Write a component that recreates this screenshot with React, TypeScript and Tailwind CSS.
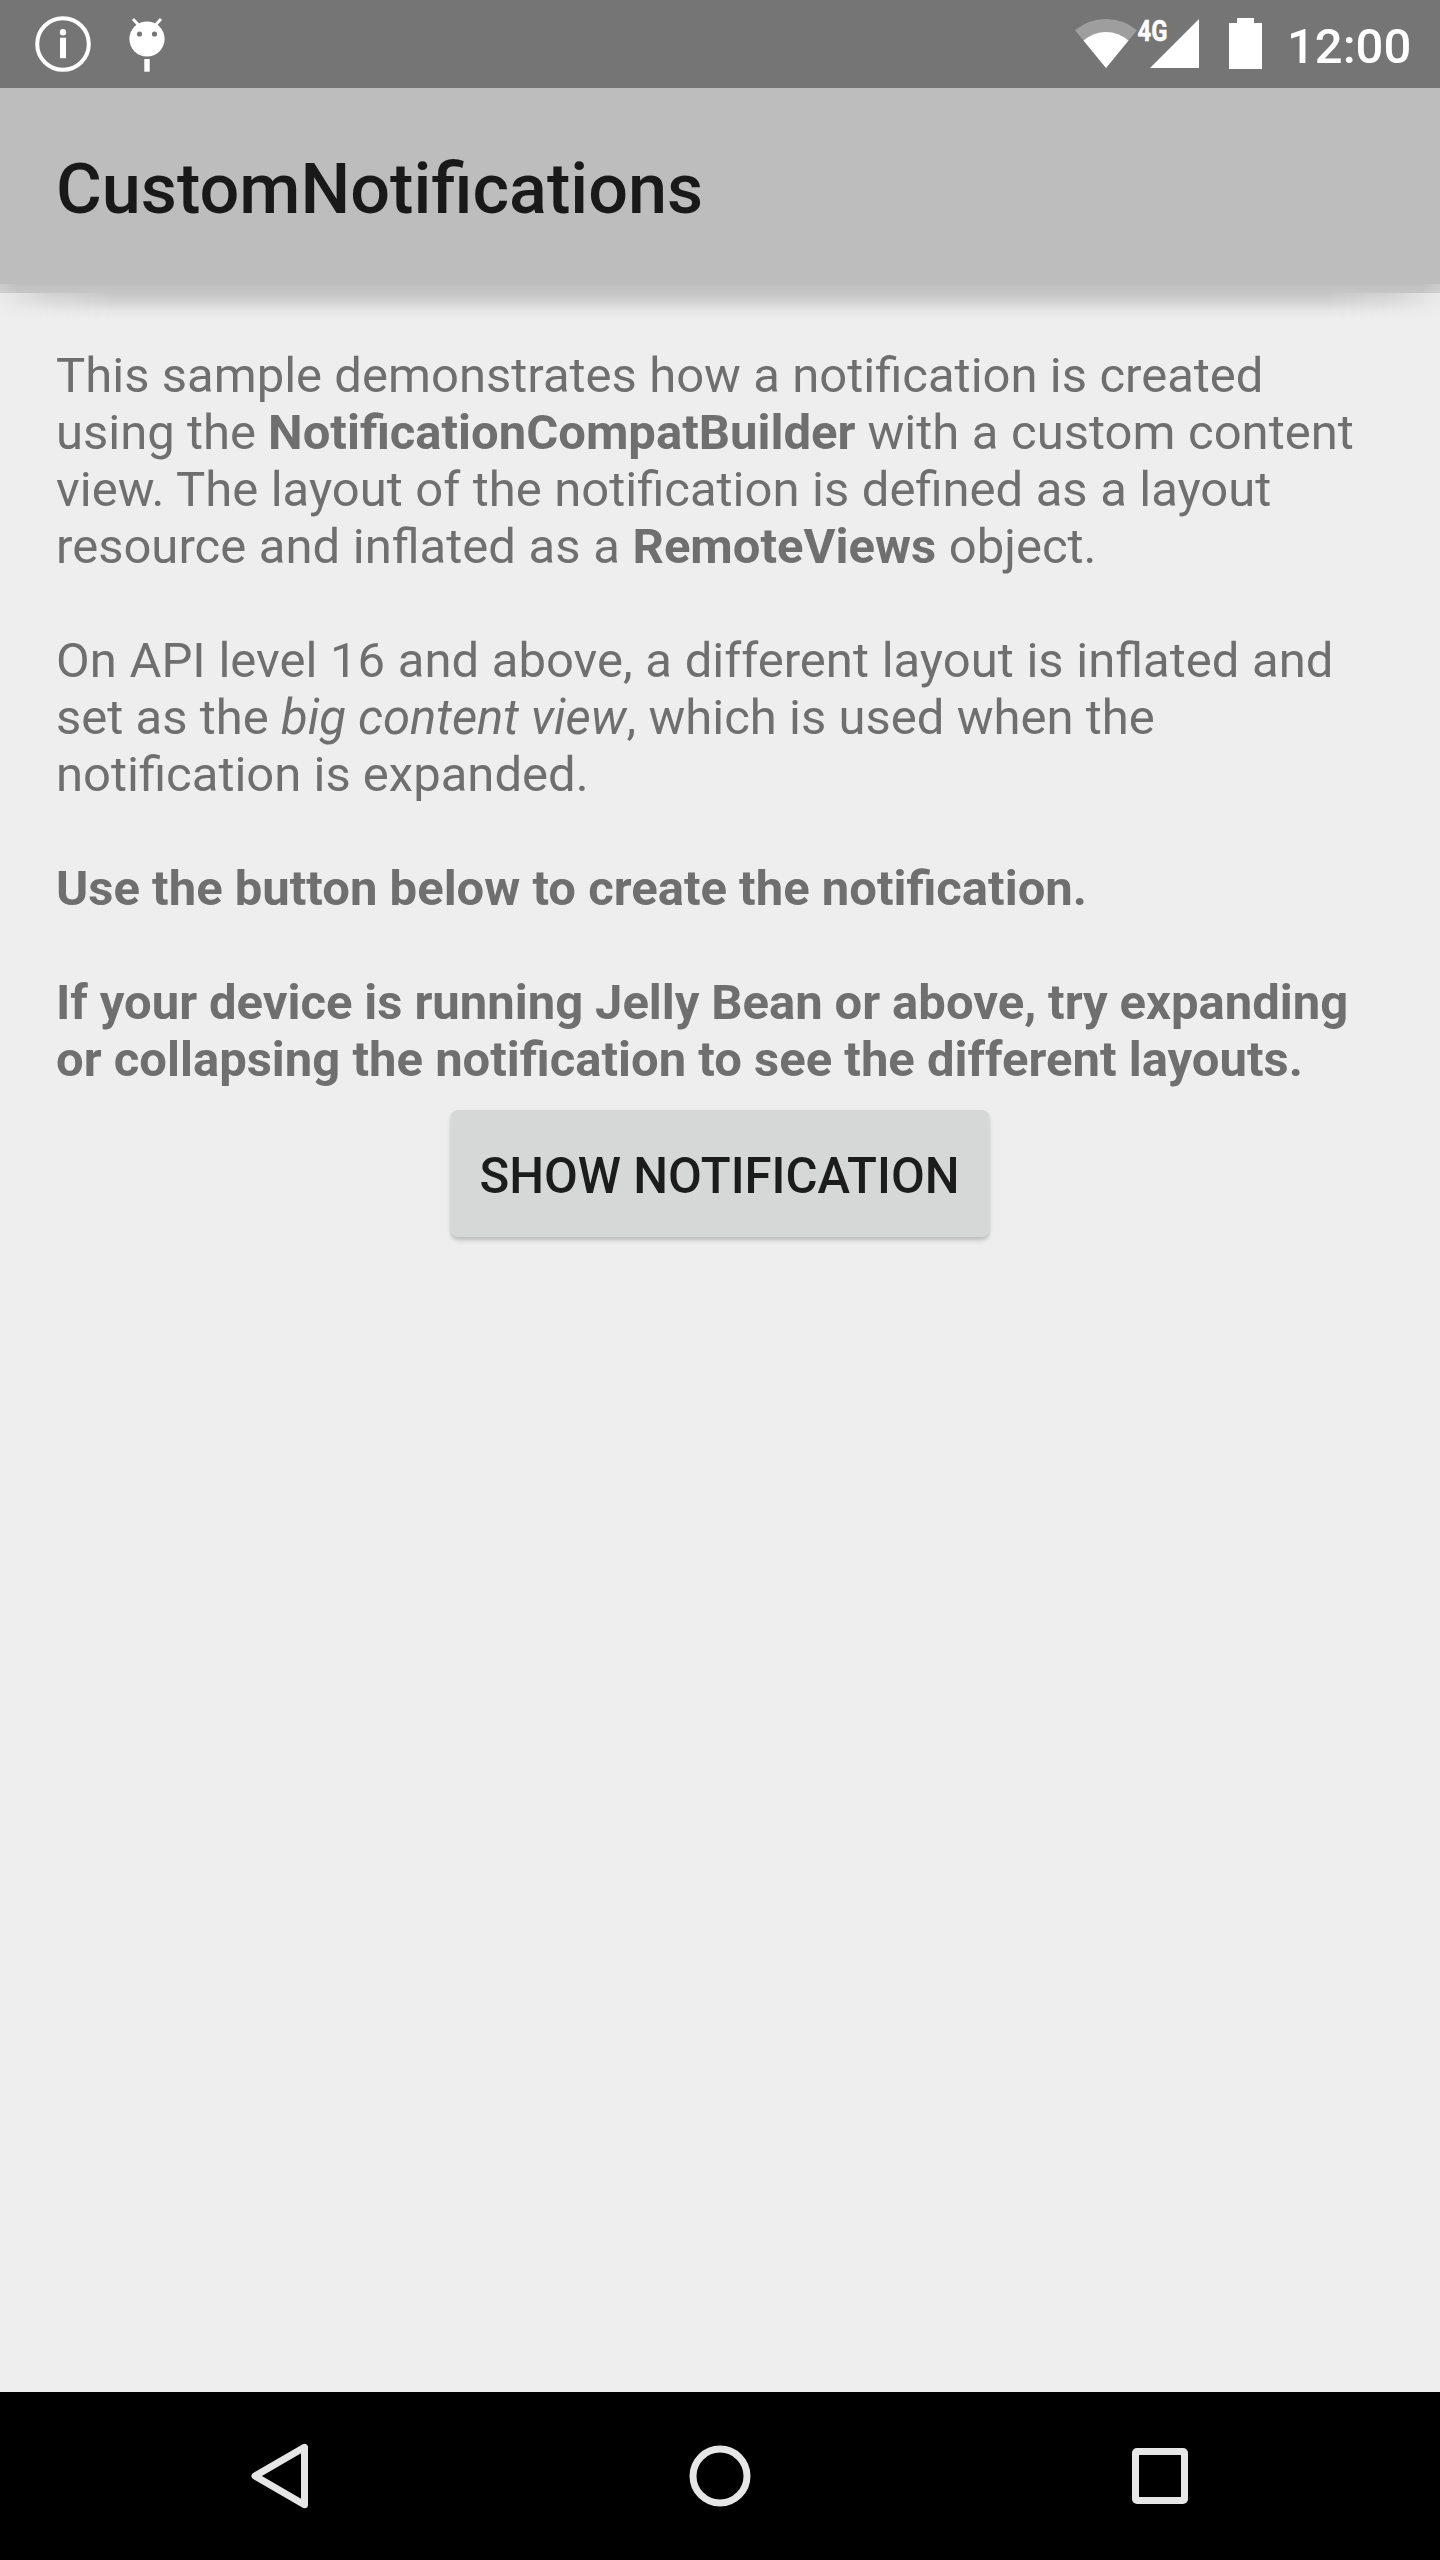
import React from "react";

function StatusBar() {
  return (
    <div className="flex h-[88px] shrink-0 justify-between bg-[#757575] text-white">
      <svg width="200" height="88" viewBox="0 0 200 88" fill="none">
        <circle cx="63" cy="44" r="25.8" stroke="#fff" strokeWidth="4" />
        <circle cx="63" cy="32.2" r="3.2" fill="#fff" />
        <rect x="60" y="37.7" width="6" height="20.5" fill="#fff" />
        <path d="M133 19l6 6.500M161 19l-6 6.500" stroke="#fff" strokeWidth="2.800" />
        <circle cx="147" cy="39" r="17.600" fill="#fff" />
        <circle cx="139.500" cy="34" r="2.600" fill="#757575" />
        <circle cx="154.500" cy="34" r="2.600" fill="#757575" />
        <rect x="144.300" y="59" width="5.400" height="12.700" fill="#fff" />
      </svg>
      <div className="flex">
        <svg width="230" height="88" viewBox="1060 0 230 88">
          <path d="M1106 68L1075 30.300Q1088.500 19 1106 19T1137 30.300Z" fill="#9e9e9e" />
          <path d="M1106 68L1083.500 40.600Q1093.500 32 1106 32T1128.500 40.600Z" fill="#fff" />
          <path d="M1150 68H1199V19Z" fill="#fff" />
          <path d="M1229 69V23H1237V18H1254V23H1262V69Z" fill="#fff" />
          <text x="1137.500" y="41" fontFamily="Roboto" fontWeight="700" fontSize="29.500" textLength="30" lengthAdjust="spacingAndGlyphs" fill="#fff" stroke="#fff" strokeWidth="0.5">4G</text>
        </svg>
        <div className="-ml-[3px] w-[153px] text-[49px] leading-[93px] font-medium">12:00</div>
      </div>
    </div>
  );
}

function HeaderShadow() {
  return (
    <div className="pointer-events-none absolute inset-x-0 top-full">
      <div className="h-[9px] bg-[linear-gradient(to_bottom,#bfbfbf,#c6c6c6)] [mask-image:linear-gradient(to_right,rgba(0,0,0,0.75),#000_18px,#000_1422px,rgba(0,0,0,0.75))]" />
      <div className="h-[27px] bg-[linear-gradient(to_bottom,#c6c6c6,#d5d5d5_10px,#e6e6e6_18px,#eeeeee)] [mask-image:linear-gradient(to_right,rgba(0,0,0,0.1),rgba(0,0,0,0.65)_45px,#000_110px,#000_1330px,rgba(0,0,0,0.65)_1395px,rgba(0,0,0,0.1))]" />
    </div>
  );
}

function NavigationBar() {
  return (
    <div className="flex h-[168px] shrink-0 items-center justify-around bg-black px-[60px]">
      <svg width="120" height="168" viewBox="220 2392 120 168" fill="none">
        <path d="M304.500 2447.300V2504.700L255 2476Z" stroke="#e6e6e6" strokeWidth="7" strokeLinejoin="round" />
      </svg>
      <svg width="120" height="168" viewBox="660 2392 120 168" fill="none">
        <circle cx="720" cy="2476" r="27" stroke="#e6e6e6" strokeWidth="7" />
      </svg>
      <svg width="120" height="168" viewBox="1100 2392 120 168" fill="none">
        <path d="M1137 2448H1183a5 5 0 0 1 5 5V2499a5 5 0 0 1 -5 5H1137a5 5 0 0 1 -5 -5V2453a5 5 0 0 1 5 -5ZM1139 2455V2497H1181V2455Z" fill="#e6e6e6" fillRule="evenodd" />
      </svg>
    </div>
  );
}

export default function App() {
  return (
    <div className="flex h-[2560px] w-[1440px] flex-col overflow-hidden bg-[#eeeeee] font-['Roboto',sans-serif]">
      <StatusBar />
      <header className="relative z-10 flex h-[196px] shrink-0 items-center bg-[#bdbdbd] pt-1.5 pl-14">
        <h1 className="text-[70.2px] leading-[82px] font-medium text-[#191919]">CustomNotifications</h1>
        <HeaderShadow />
      </header>
      <main className="flex grow flex-col items-center">
        <div className="flex w-full flex-col gap-[57px] pt-[63px] pl-14 text-[49px] leading-[57px] whitespace-nowrap text-[#6f6f6f]">
          <p>
            <span className="[word-spacing:0.15px]">This sample demonstrates how a notification is created</span><br />
            using the <b>NotificationCompatBuilder</b> <span className="[word-spacing:0.4px]">with a custom content</span><br />
            <span className="[word-spacing:0.35px]">view. The layout of the notification is defined as a layout</span><br />
            <span className="[word-spacing:0.5px]">resource and inflated as a <b>RemoteViews</b> object.</span>
          </p>
          <p>
            <span className="[word-spacing:0.55px]">On API level 16 and above, a different layout is inflated and</span><br />
            <span className="[word-spacing:0.1px]">set as the <i>big content view</i>, which is used when the</span><br />
            notification is expanded.
          </p>
          <p className="font-bold">Use the button below to create the notification.</p>
          <p className="font-bold">
            <span className="[word-spacing:-0.3px]">If your device is running Jelly Bean or above, try expanding</span><br />
            or collapsing the notification to see the different layouts.
          </p>
        </div>
        <button className="mt-[22px] mr-px h-[127px] w-[538px] rounded-[7px] bg-[#d6d8d7] pt-1.5 text-[49.1px] font-medium text-[#1c1c1c] shadow-[0_3px_4px_rgba(0,0,0,0.22)]">
          SHOW NOTIFICATION
        </button>
      </main>
      <NavigationBar />
    </div>
  );
}
